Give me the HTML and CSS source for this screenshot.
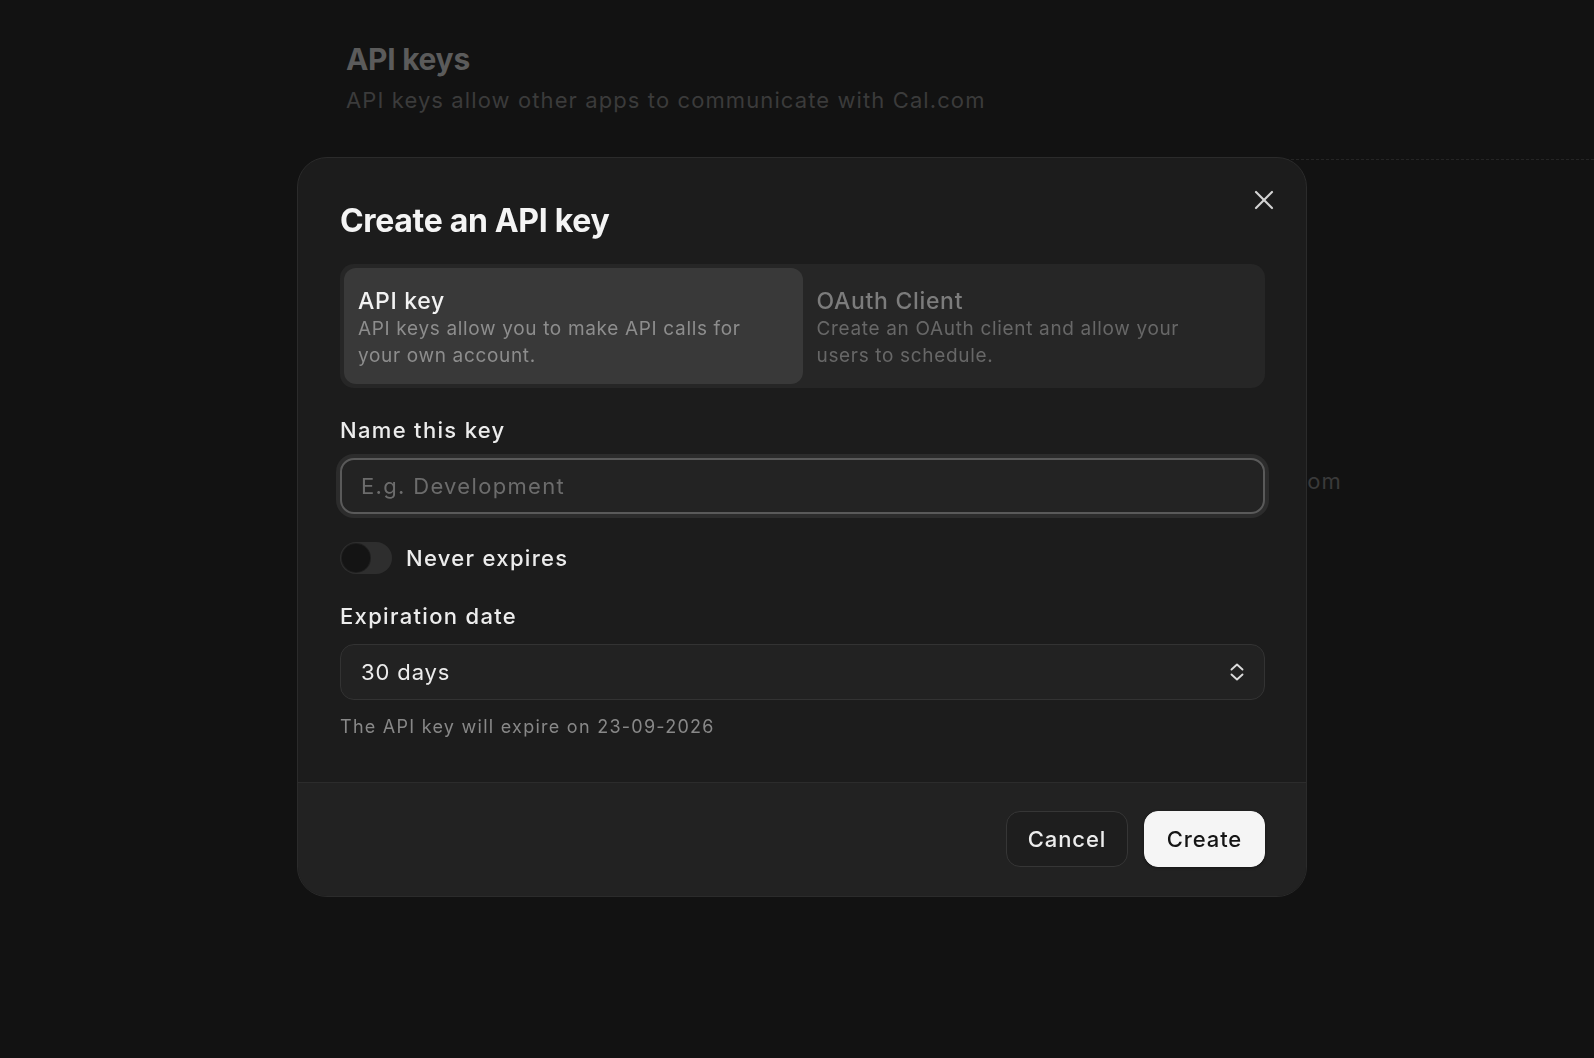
FILE: index.html
```html
<!DOCTYPE html>
<html lang="en">
<head>
  <meta charset="UTF-8">
  <meta name="viewport" content="width=device-width, initial-scale=1.0">
  <title>API keys</title>
  <link rel="stylesheet" href="styles.css">
</head>
<body>
  <div class="page">
    <h1>API keys</h1>
    <p class="subtitle">API keys allow other apps to communicate with Cal.com</p>
    <div class="card">
      <div class="card-row">Cal.com</div>
    </div>
  </div>

  <div class="overlay">
    <div class="modal">
      <button class="close" aria-label="Close">
        <svg width="20" height="20" viewBox="0 0 20 20" fill="none" stroke="currentColor" stroke-width="2.2" stroke-linecap="round">
          <path d="M2 2 L18 18"/>
          <path d="M18 2 L2 18"/>
        </svg>
      </button>

      <div class="modal-body">
        <h2>Create an API key</h2>

        <div class="tabs">
          <div class="tab active">
            <div class="tab-title">API key</div>
            <div class="tab-desc">API keys allow you to make API calls for your own account.</div>
          </div>
          <div class="tab">
            <div class="tab-title">OAuth Client</div>
            <div class="tab-desc">Create an OAuth client and allow your users to schedule.</div>
          </div>
        </div>

        <label class="field-label" for="keyName">Name this key</label>
        <input class="text-input" id="keyName" type="text" placeholder="E.g. Development">

        <div class="toggle-row">
          <span class="toggle"><span class="knob"></span></span>
          <span class="toggle-label">Never expires</span>
        </div>

        <div class="field-label">Expiration date</div>
        <div class="select">
          <span>30 days</span>
          <svg width="16" height="20" viewBox="0 0 16 20" fill="none" stroke="currentColor" stroke-width="1.9" stroke-linecap="round" stroke-linejoin="round">
            <path d="M2.5 7.5 L8 2.5 L13.5 7.5"/>
            <path d="M2.5 12.5 L8 17.5 L13.5 12.5"/>
          </svg>
        </div>
        <p class="hint">The API key will expire on 23-09-2026</p>
      </div>

      <div class="modal-footer">
        <button class="btn btn-secondary">Cancel</button>
        <button class="btn btn-primary">Create</button>
      </div>
    </div>
  </div>
</body>
</html>
```

FILE: styles.css
```css
body {
  margin: 0;
  background: #121212;
  font-family: Inter, "Noto Sans", sans-serif;
  overflow: hidden;
  height: 100vh;
}
.page {
  padding: 41px 0 0 346px;
}
h1 {
  margin: 0;
  font-size: 30px;
  line-height: 36px;
  font-weight: 700;
  letter-spacing: -0.01em;
  color: #5b5b5b;
}
.subtitle {
  margin: 8px 0 0;
  font-size: 22px;
  line-height: 30px;
  letter-spacing: 0.05em;
  color: #3b3b3b;
}
.card {
  margin-top: 44px;
  border-top: 1px dashed #252525;
}
.card-row {
  width: 996px;
  display: flex;
  justify-content: flex-end;
  padding-top: 306px;
  font-size: 22px;
  line-height: 30px;
  letter-spacing: 0.05em;
  color: #3a3a3a;
}

.overlay {
  position: fixed;
  inset: 0;
  display: flex;
  align-items: center;
  justify-content: center;
}
.modal {
  position: relative;
  width: 1010px;
  margin: -4px 0 0 10px;
  box-sizing: border-box;
  background: #1c1c1c;
  border: 1px solid #2b2b2b;
  border-radius: 30px;
  overflow: hidden;
}
.close {
  position: absolute;
  top: 32px;
  right: 32px;
  background: none;
  border: 0;
  padding: 0;
  color: #d4d4d4;
  width: 20px;
  height: 20px;
  display: flex;
}
.modal-body {
  padding: 45px 41px 43px 42px;
}
h2 {
  margin: 0;
  font-size: 32px;
  line-height: 36px;
  font-weight: 700;
  letter-spacing: -0.01em;
  color: #f4f4f4;
}
.tabs {
  margin-top: 25px;
  display: grid;
  grid-template-columns: 1fr 1fr;
  padding: 4px;
  background: #262626;
  border-radius: 14px;
}
.tab {
  padding: 19px 14px 15px;
  border-radius: 12px;
}
.tab.active {
  background: #393939;
}
.tab-title {
  font-size: 23px;
  line-height: 28px;
  font-weight: 500;
  letter-spacing: 0.03em;
  color: #7c7c7c;
}
.tab-desc {
  font-size: 19px;
  line-height: 27px;
  letter-spacing: 0.035em;
  color: #676767;
  max-width: 400px;
}
.tab.active .tab-title {
  color: #f2f2f2;
}
.tab.active .tab-desc {
  color: #8d8d8d;
}
.field-label {
  display: block;
  margin-top: 28px;
  font-size: 22px;
  line-height: 28px;
  font-weight: 500;
  letter-spacing: 0.06em;
  color: #ececec;
}
.text-input {
  display: block;
  box-sizing: border-box;
  width: 100%;
  height: 56px;
  margin-top: 14px;
  padding: 0 19px;
  background: #232323;
  border: 2px solid #5a5a5a;
  border-radius: 14px;
  box-shadow: 0 0 0 4px #2c2c2c;
  font-family: inherit;
  font-size: 22px;
  letter-spacing: 0.06em;
  color: #ececec;
  outline: none;
}
.text-input::placeholder {
  color: #6c6c6c;
}
.toggle-row {
  margin-top: 28px;
  display: flex;
  align-items: center;
  gap: 14px;
}
.toggle {
  width: 52px;
  height: 32px;
  box-sizing: border-box;
  padding: 2px;
  border-radius: 16px;
  background: #2e2e2e;
  display: flex;
}
.knob {
  width: 28px;
  height: 28px;
  border-radius: 50%;
  background: #141414;
  box-shadow: 0 0 0 1px #1f1f1f;
}
.toggle-label {
  font-size: 22px;
  line-height: 28px;
  font-weight: 500;
  letter-spacing: 0.06em;
  color: #ececec;
}
.select {
  margin-top: 14px;
  height: 56px;
  box-sizing: border-box;
  padding: 0 19px 0 20px;
  display: flex;
  align-items: center;
  justify-content: space-between;
  background: #222222;
  border: 1px solid #333333;
  border-radius: 14px;
  font-size: 22px;
  letter-spacing: 0.04em;
  color: #ececec;
}
.select svg {
  color: #dcdcdc;
}
.hint {
  margin: 15px 0 0;
  font-size: 18px;
  line-height: 24px;
  letter-spacing: 0.07em;
  color: #888888;
}
.modal-footer {
  display: flex;
  justify-content: flex-end;
  gap: 16px;
  padding: 28px 41px 29px;
  background: #222222;
  border-top: 1px solid #2c2c2c;
}
.btn {
  height: 56px;
  box-sizing: border-box;
  border-radius: 14px;
  font-family: inherit;
  font-size: 22px;
  font-weight: 500;
  letter-spacing: 0.04em;
  cursor: pointer;
}
.btn-secondary {
  width: 122px;
  background: #1e1e1e;
  border: 1px solid #363636;
  color: #ececec;
}
.btn-primary {
  width: 121px;
  background: #f5f5f5;
  border: 1px solid #f5f5f5;
  color: #151515;
  box-shadow: 0 1px 3px rgba(0,0,0,0.4);
}
```
